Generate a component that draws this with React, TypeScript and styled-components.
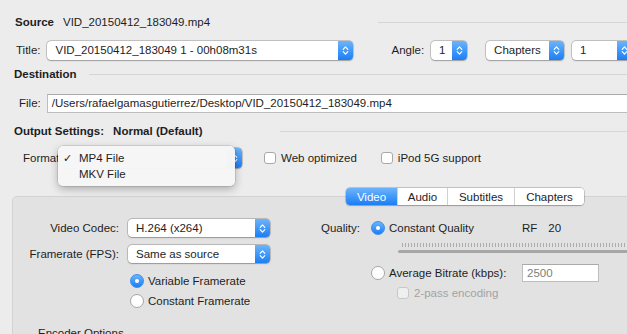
import React from 'react';
import styled, { createGlobalStyle } from 'styled-components';

const GlobalStyle = createGlobalStyle`
  html, body {
    margin: 0;
    background: #ececec;
    overflow: hidden;
  }
  body {
    font-family: "Liberation Sans", Arial, sans-serif;
    font-size: 11.5px;
    color: #1e1e1e;
  }
`;

type PopupProps = {
  value: string;
  width: number;
  height?: number;
  ml?: number;
  pad?: number;
};

// up/down arrows of the blue popup cap
function Chevrons() {
  return (
    <svg width="7" height="11" viewBox="0 0 7 11">
      <path d="M1.2 4.3 L3.5 1.9 L5.8 4.3 M1.2 6.7 L3.5 9.1 L5.8 6.7" stroke="#fff" strokeWidth="1.2" fill="none" strokeLinecap="round" strokeLinejoin="round" />
    </svg>
  );
}

function Popup({ value, width, height = 19, ml = 0, pad = 8 }: PopupProps) {
  return (
    <PopupBox $w={width} $h={height} $ml={ml}>
      <PopupValue $pad={pad}>{value}</PopupValue>
      <PopupCap>
        <Chevrons />
      </PopupCap>
    </PopupBox>
  );
}

function App() {
  return (
    <>
      <GlobalStyle />
      <Window>
        <Row $mt={12} $pl={15}>
          <Bold>Source</Bold>
          <Text $ml={9}>VID_20150412_183049.mp4</Text>
          <Rule $ml={0} $auto />
        </Row>

        <Row $mt={8} $pl={16}>
          <Text>Title:</Text>
          <Popup value="VID_20150412_183049 1 - 00h08m31s" width={306} ml={6} pad={9} />
          <Text $ml={39}>Angle:</Text>
          <Popup value="1" width={36} ml={7} />
          <Popup value="Chapters" width={78} ml={19} />
          <Popup value="1" width={60} ml={8} />
        </Row>

        <Row $mt={4} $pl={14}>
          <Bold>Destination</Bold>
          <Rule $ml={12} />
        </Row>

        <Row $mt={9} $pl={19}>
          <Text>File:</Text>
          <Field $w={600} $ml={6}>/Users/rafaelgamasgutierrez/Desktop/VID_20150412_183049.mp4</Field>
        </Row>

        <Row $mt={8} $pl={14}>
          <Bold>Output Settings:</Bold>
          <Bold $ml={9}>Normal (Default)</Bold>
          <Rule $ml={77} />
        </Row>

        <Row $mt={7} $pl={23} $rel>
          <FormatLabel>Format:</FormatLabel>
          {/* value hidden under the open menu */}
          <Popup value="" width={182} height={20} />
          <CheckItem $ml={22}>
            <Checkbox />
            <span>Web optimized</span>
          </CheckItem>
          <CheckItem $ml={24}>
            <Checkbox />
            <span>iPod 5G support</span>
          </CheckItem>

          <Menu>
            <MenuItem>
              <CheckMark>✓</CheckMark>
              <span>MP4 File</span>
            </MenuItem>
            <MenuItem>
              <CheckMark />
              <span>MKV File</span>
            </MenuItem>
          </Menu>
        </Row>

        <TabRow>
          <TabBar>
            <Tab $w={51} $on>Video</Tab>
            <Tab $w={50}>Audio</Tab>
            <Tab $w={67}>Subtitles</Tab>
            <Tab $w={70}>Chapters</Tab>
          </TabBar>
        </TabRow>

        <Group>
          <LeftCol>
            <FormRow $h={18}>
              <FormLabel>Video Codec:</FormLabel>
              <Popup value="H.264 (x264)" width={142} height={18} />
            </FormRow>
            <FormRow $h={18} $mt={8}>
              <FormLabel>Framerate (FPS):</FormLabel>
              <Popup value="Same as source" width={142} height={18} />
            </FormRow>
            <FormRow $h={14} $mt={11} $pl={117}>
              <Radio $on />
              <OptionText>Variable Framerate</OptionText>
            </FormRow>
            <FormRow $h={14} $mt={6} $pl={117}>
              <Radio />
              <OptionText>Constant Framerate</OptionText>
            </FormRow>
            <SubTitle>Encoder Options</SubTitle>
          </LeftCol>

          <RightCol>
            <FormRow $h={18}>
              <QualityLabel>Quality:</QualityLabel>
              <Radio $on />
              <OptionText $w={133}>Constant Quality</OptionText>
              <span>RF</span>
              <Text $ml={11}>20</Text>
            </FormRow>
            <Slider>
              <Ticks />
              <Track />
            </Slider>
            <FormRow $h={18} $mt={11} $pl={68}>
              <Radio />
              <OptionText $w={133}>Average Bitrate (kbps):</OptionText>
              <Field $w={77} $h={18} $muted>2500</Field>
            </FormRow>
            <FormRow $h={12} $mt={5} $pl={94}>
              <Checkbox $disabled />
              <DisabledText>2-pass encoding</DisabledText>
            </FormRow>
          </RightCol>
        </Group>
      </Window>
    </>
  );
}

export default App;

const Window = styled.div`
  width: 627px;
  height: 334px;
  overflow: hidden;
`;

const Row = styled.div<{ $mt: number; $pl: number; $rel?: boolean }>`
  display: flex;
  align-items: center;
  height: 20px;
  margin-top: ${(p) => p.$mt}px;
  padding-left: ${(p) => p.$pl}px;
  white-space: nowrap;
  position: ${(p) => (p.$rel ? 'relative' : 'static')};
`;

const Bold = styled.span<{ $ml?: number }>`
  font-weight: 700;
  margin-left: ${(p) => p.$ml || 0}px;
`;

const Text = styled.span<{ $ml?: number }>`
  margin-left: ${(p) => p.$ml || 0}px;
`;

const Rule = styled.div<{ $ml: number; $auto?: boolean }>`
  height: 1px;
  background: #d6d6d6;
  margin-left: ${(p) => (p.$auto ? 'auto' : `${p.$ml}px`)};
  flex: ${(p) => (p.$auto ? 'none' : '1')};
  width: ${(p) => (p.$auto ? '249px' : 'auto')};
`;

const PopupBox = styled.div<{ $w: number; $h: number; $ml: number }>`
  display: flex;
  flex: none;
  width: ${(p) => p.$w}px;
  height: ${(p) => p.$h}px;
  margin-left: ${(p) => p.$ml}px;
  background: #fff;
  border-radius: 4px;
  overflow: hidden;
  box-shadow: 0 0 0 0.5px rgba(0, 0, 0, 0.3), 0 0.5px 1.5px rgba(0, 0, 0, 0.22);
`;

const PopupValue = styled.div<{ $pad: number }>`
  flex: 1;
  display: flex;
  align-items: center;
  padding-left: ${(p) => p.$pad}px;
  overflow: hidden;
`;

const PopupCap = styled.div`
  width: 15px;
  flex: none;
  display: flex;
  align-items: center;
  justify-content: center;
  background: linear-gradient(#6cb4fb, #1b7ef6);
`;

const Field = styled.div<{ $w: number; $ml?: number; $h?: number; $muted?: boolean }>`
  flex: none;
  box-sizing: border-box;
  width: ${(p) => p.$w}px;
  height: ${(p) => p.$h || 19}px;
  margin-left: ${(p) => p.$ml || 0}px;
  display: flex;
  align-items: center;
  padding-left: 4px;
  background: #fff;
  border: 1px solid #bdbdbd;
  border-top-color: #a9a9a9;
  color: ${(p) => (p.$muted ? '#7d7d7d' : '#1e1e1e')};
`;

const FormatLabel = styled.span`
  width: 37px;
  flex: none;
`;

const CheckItem = styled.label<{ $ml: number }>`
  display: flex;
  align-items: center;
  gap: 5px;
  margin-left: ${(p) => p.$ml}px;
`;

const Checkbox = styled.span<{ $disabled?: boolean }>`
  box-sizing: border-box;
  width: 12px;
  height: 12px;
  flex: none;
  background: #fff;
  border: 1px solid #a8a8a8;
  border-radius: 3px;
  opacity: ${(p) => (p.$disabled ? 0.45 : 1)};
`;

const Menu = styled.div`
  position: absolute;
  left: 58px;
  top: -2px;
  width: 177px;
  height: 40px;
  box-sizing: border-box;
  padding-top: 4px;
  background: rgba(246, 246, 246, 0.98);
  border-radius: 5px;
  box-shadow: 0 0 0 0.5px rgba(0, 0, 0, 0.18), 0 3px 9px rgba(0, 0, 0, 0.28);
  z-index: 2;
`;

const MenuItem = styled.div`
  display: flex;
  align-items: center;
  height: 16px;
  padding-left: 5px;
  font-size: 11.5px;
`;

const CheckMark = styled.span`
  width: 16px;
  font-family: "DejaVu Sans", sans-serif;
  font-size: 11px;
`;

const TabRow = styled.div`
  display: flex;
  margin-top: 20px;
  margin-bottom: -9px;
  padding-left: 346px;
  position: relative;
  z-index: 1;
`;

const TabBar = styled.div`
  display: flex;
  height: 17px;
  background: #fff;
  border-radius: 4px;
  overflow: hidden;
  box-shadow: 0 0 0 0.5px rgba(0, 0, 0, 0.3), 0 0.5px 1.5px rgba(0, 0, 0, 0.2);
`;

const Tab = styled.div<{ $w: number; $on?: boolean }>`
  box-sizing: border-box;
  width: ${(p) => p.$w}px;
  display: flex;
  align-items: center;
  justify-content: center;
  & + & {
    border-left: 1px solid #d2d2d2;
  }
  color: ${(p) => (p.$on ? '#fff' : '#1e1e1e')};
  background: ${(p) => (p.$on ? 'linear-gradient(#6cb4fb, #1b7ef6)' : '#fff')};
`;

const Group = styled.div`
  display: flex;
  box-sizing: border-box;
  margin-left: 12px;
  width: 640px;
  height: 160px;
  padding-top: 22px;
  background: #e2e2e2;
  border: 1px solid #d2d2d2;
  border-radius: 5px;
  white-space: nowrap;
`;

const LeftCol = styled.div`
  width: 290px;
  flex: none;
  display: flex;
  flex-direction: column;
`;

const RightCol = styled.div`
  flex: 1;
  display: flex;
  flex-direction: column;
`;

const FormRow = styled.div<{ $h: number; $mt?: number; $pl?: number }>`
  display: flex;
  align-items: center;
  height: ${(p) => p.$h}px;
  margin-top: ${(p) => p.$mt || 0}px;
  padding-left: ${(p) => p.$pl || 0}px;
`;

const FormLabel = styled.span`
  width: 106px;
  margin-right: 9px;
  text-align: right;
  flex: none;
`;

const QualityLabel = styled.span`
  width: 57px;
  margin-right: 11px;
  text-align: right;
  flex: none;
`;

const Radio = styled.span<{ $on?: boolean }>`
  box-sizing: border-box;
  width: 14px;
  height: 14px;
  flex: none;
  border-radius: 50%;
  position: relative;
  background: ${(p) => (p.$on ? 'linear-gradient(#6cb4fb, #1b7ef6)' : '#fff')};
  border: 1px solid ${(p) => (p.$on ? '#3a8cf0' : '#a6a6a6')};
  &::after {
    content: '';
    display: ${(p) => (p.$on ? 'block' : 'none')};
    position: absolute;
    left: 4px;
    top: 4px;
    width: 4px;
    height: 4px;
    border-radius: 50%;
    background: #fff;
  }
`;

const OptionText = styled.span<{ $w?: number }>`
  margin-left: 4px;
  width: ${(p) => (p.$w ? `${p.$w}px` : 'auto')};
  flex: none;
`;

const DisabledText = styled.span`
  margin-left: 5px;
  color: #a3a3a3;
`;

const SubTitle = styled.div`
  margin-top: 19px;
  padding-left: 25px;
`;

const Slider = styled.div`
  margin-top: 6px;
  margin-left: 95px;
  width: 300px;
`;

const Ticks = styled.div`
  height: 4px;
  margin-left: 4px;
  background: repeating-linear-gradient(to right, #9e9e9e 0 1px, transparent 1px 3px);
  opacity: 0.8;
`;

const Track = styled.div`
  height: 3px;
  margin-top: 3px;
  border-radius: 2px;
  background: #a7a7a7;
`;
